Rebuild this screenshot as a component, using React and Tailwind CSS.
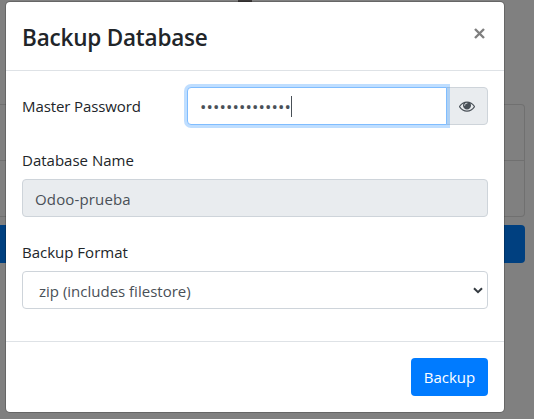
import React from "react";

function PageBehind() {
  return (
    <div className="flex h-[419px] flex-col bg-[#808080]">
      <div className="flex h-[104px] items-start">
        <div className="ml-[238px] h-[2px] w-[14px] bg-[#3b3838]" />
      </div>
      <div className="mr-[9px] flex h-[113px] flex-col rounded-r border border-l-0 border-[#707070]">
        <div className="h-[56px] border-b border-[#707070]" />
      </div>
      <div className="mt-2 mr-[9px] h-[38px] rounded-r bg-[#004080]" />
    </div>
  );
}

function EyeIcon() {
  return (
    <svg viewBox="0 0 1792 1792" className="h-4 w-4" fill="currentColor">
      <path d="M1664 960q-152-236-381-353 61 104 61 225 0 185-131.5 316.5t-316.5 131.5-316.5-131.5-131.5-316.5q0-121 61-225-229 117-381 353 133 205 333.5 326.5t434.5 121.5 434.5-121.5 333.5-326.5zm-720-384q0-20-14-34t-34-14q-125 0-214.5 89.5t-89.5 214.5q0 20 14 34t34 14 34-14 14-34q0-86 61-147t147-61q20 0 34-14t14-34zm848 384q0 34-20 69-140 230-376.5 368.5t-499.5 138.5-499.5-139-376.5-368q-20-35-20-69t20-69q140-229 376.5-368t499.5-139 499.5 139 376.5 368q20 35 20 69z" />
    </svg>
  );
}

export default function App() {
  return (
    <div className="relative h-[419px] w-[534px] overflow-hidden font-['Open_Sans','Noto_Sans',sans-serif] text-[15px] leading-6 text-[#212529]">
      <PageBehind />
      <div className="absolute top-px left-[5px] flex h-[412px] w-[500px] flex-col rounded-[5px] border border-black/20 bg-white bg-clip-padding">
        <header className="flex h-[69px] shrink-0 items-center justify-between border-b border-[#dee2e6] px-4">
          <h4 className="pt-[3px] text-[22.5px] leading-9 font-semibold tracking-[-0.2px] whitespace-nowrap">Backup Database</h4>
          <button className="mt-[-5px] mr-[3px] text-[#7f7f7f]" aria-label="Close">
            <svg viewBox="0 0 11 11" className="h-[11px] w-[11px]" stroke="currentColor" strokeWidth="2.4">
              <path d="M1 1 10 10M10 1 1 10" />
            </svg>
          </button>
        </header>

        <div className="flex h-[270px] shrink-0 flex-col px-4 pt-4">
          <div className="flex h-[38px] items-center">
            <label className="w-[165px] tracking-[-0.1px] whitespace-nowrap">Master Password</label>
            <div className="flex h-[38px] flex-1">
              <div className="relative z-10 flex w-[260px] items-center rounded-l border border-[#80bdff] bg-white pl-3 text-[#495057] shadow-[0_0_0_3px_rgba(0,123,255,0.25)]">
                <span className="pt-[2px] text-[17px] tracking-[0.1px]">••••••••••••••</span>
                <span className="h-[21px] w-px bg-[#495057]" />
              </div>
              <div className="-ml-px flex flex-1 items-center justify-center rounded-r border border-[#ced4da] bg-[#e9ecef] pr-px text-[#495057]">
                <EyeIcon />
              </div>
            </div>
          </div>

          <label className="mt-[23px] h-6">Database Name</label>
          <div className="mt-[7px] flex h-[38px] items-center rounded border border-[#ced4da] bg-[#e9ecef] px-3 text-[#495057]">
            <span className="pt-[2px] tracking-[0.15px]">Odoo-prueba</span>
          </div>

          <label className="mt-[23px] h-6">Backup Format</label>
          <div className="mt-[7px] flex h-[38px] items-center justify-between rounded border border-[#ced4da] bg-white pr-[4px] pl-4 text-[#495057]">
            <span className="pt-[2px]">zip (includes filestore)</span>
            <svg viewBox="0 0 10 7" className="h-[7px] w-[10px]" fill="none" stroke="#343a40" strokeWidth="2">
              <path d="M1 1.2 5 5.2 9 1.2" />
            </svg>
          </div>
        </div>

        <footer className="flex flex-1 items-start justify-end border-t border-[#dee2e6] px-4 pt-4">
          <button className="h-[38px] w-[77px] rounded bg-[#007bff] text-white">Backup</button>
        </footer>
      </div>
    </div>
  );
}
